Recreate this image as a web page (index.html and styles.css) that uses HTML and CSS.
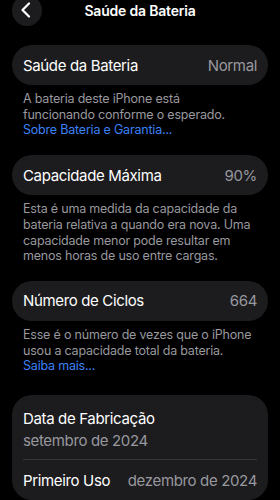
FILE: index.html
```html
<!DOCTYPE html>
<html lang="pt">
<head>
    <meta charset="UTF-8">
    <meta name="viewport" content="width=device-width, initial-scale=1.0">
    <title>Saúde da Bateria</title>
    <link rel="stylesheet" href="styles.css">
</head>
<body>
    <div class="header">
        <button class="back">
            <svg width="12" height="16" viewBox="0 0 12 16">
                <path d="M9 1.5 L2.5 8 L9 14.5" fill="none" stroke="#fff" stroke-width="2.2" stroke-linecap="round" stroke-linejoin="round"/>
            </svg>
        </button>
        <h1 class="title">Saúde da Bateria</h1>
        <span></span>
    </div>

    <div class="group">
        <div class="card row">
            <span>Saúde da Bateria</span>
            <span class="value">Normal</span>
        </div>
        <p class="note">A bateria deste iPhone está<br>funcionando conforme o esperado.<br><a href="#">Sobre Bateria e Garantia...</a></p>
    </div>

    <div class="group">
        <div class="card row">
            <span>Capacidade Máxima</span>
            <span class="value">90%</span>
        </div>
        <p class="note">Esta é uma medida da capacidade da<br>bateria relativa a quando era nova. Uma<br>capacidade menor pode resultar em<br>menos horas de uso entre cargas.</p>
    </div>

    <div class="group">
        <div class="card row">
            <span>Número de Ciclos</span>
            <span class="value">664</span>
        </div>
        <p class="note">Esse é o número de vezes que o iPhone<br>usou a capacidade total da bateria.<br><a href="#">Saiba mais...</a></p>
    </div>

    <div class="group last">
        <div class="card list">
            <div class="stack">
                <span>Data de Fabricação</span>
                <span class="value">setembro de 2024</span>
            </div>
            <div class="row inner">
                <span>Primeiro Uso</span>
                <span class="value">dezembro de 2024</span>
            </div>
        </div>
    </div>
</body>
</html>
```

FILE: styles.css
```css
* {
    margin: 0;
    padding: 0;
    box-sizing: border-box;
}

body {
    font-family: Inter, "Noto Sans", sans-serif;
    background-color: #000;
    color: #fff;
    width: 280px;
    height: 500px;
    overflow: hidden;
}

.header {
    display: grid;
    grid-template-columns: 30px 1fr 30px;
    align-items: center;
    height: 32px;
    margin-top: -6px;
    padding: 0 12px;
}

.back {
    width: 30px;
    height: 31px;
    border: none;
    border-radius: 50%;
    background-color: #1c1c1e;
    display: flex;
    align-items: center;
    justify-content: center;
    padding-right: 2px;
}

.title {
    text-align: center;
    font-size: 14px;
    font-weight: 600;
    letter-spacing: -0.2px;
}

.group {
    margin: 19px 12px 0;
}

.group + .group {
    margin-top: 17px;
}

.group.last {
    margin-top: 21px;
}

.card {
    background-color: #1c1c1e;
    border-radius: 20px;
    font-size: 15px;
    letter-spacing: -0.35px;
}

.row {
    display: flex;
    justify-content: space-between;
    align-items: center;
    height: 40px;
    padding: 0 11px;
}

.value {
    color: #98989e;
}

.note {
    padding: 6px 11px 0;
    font-size: 12.5px;
    line-height: 15.7px;
    letter-spacing: -0.2px;
    white-space: nowrap;
    color: #98989e;
}

.note a {
    color: #3b82f6;
    text-decoration: none;
}

.list {
    padding-top: 15px;
}

.stack {
    display: flex;
    flex-direction: column;
    gap: 4px;
    margin: 0 11px;
    padding-bottom: 9px;
    border-bottom: 1px solid #38383a;
    line-height: 18px;
}

.inner {
    padding: 0 11px;
}
```
